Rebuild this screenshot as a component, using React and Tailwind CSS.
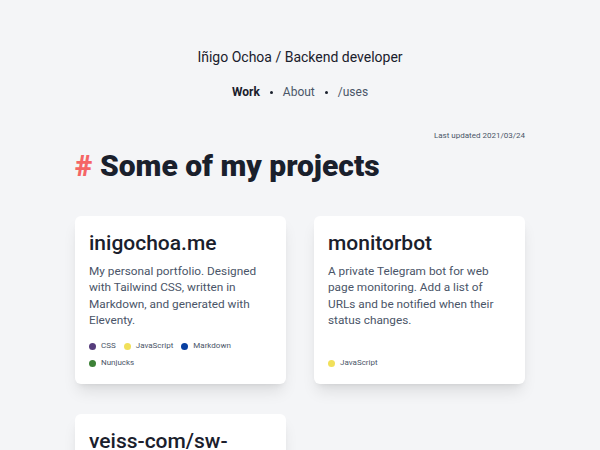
const projects = [
  {
    name: 'inigochoa.me',
    description: 'My personal portfolio. Designed with Tailwind CSS, written in Markdown, and generated with Eleventy.',
    langs: ['CSS', 'JavaScript', 'Markdown', 'Nunjucks'],
  },
  {
    name: 'monitorbot',
    description: 'A private Telegram bot for web page monitoring. Add a list of URLs and be notified when their status changes.',
    langs: ['JavaScript'],
  },
  {
    name: 'veiss-com/sw-precache',
    description: 'Service worker generation for offline-first web apps.',
    langs: ['JavaScript'],
  },
]

const langColor = {
  CSS: 'bg-[#563d7c]',
  JavaScript: 'bg-[#f1e05a]',
  Markdown: 'bg-[#083fa1]',
  Nunjucks: 'bg-[#3d8137]',
}

function Card({ p }) {
  return (
    <div className="flex flex-col rounded-md bg-white px-[14px] pt-[13px] pb-[12px] shadow-lg">
      <h3 className="text-[21px] leading-[28px] font-medium text-[#1a202c]">{p.name}</h3>
      <p className="mt-[6px] text-[11.8px] leading-[16.3px] text-[#4a5568]">{p.description}</p>
      <div className="mt-auto flex flex-wrap gap-x-[8px] pt-[10px]">
        {p.langs.map((l) => (
          <span key={l} className="inline-flex items-center gap-[5px] text-[8px] leading-[16.7px] text-[#4a5568]">
            <span className={`h-[7px] w-[7px] rounded-full ${langColor[l]}`} />
            {l}
          </span>
        ))}
      </div>
    </div>
  )
}

export default function App() {
  return (
    <div className="min-h-screen bg-[#f4f5f7] font-['Roboto',sans-serif] text-[#1a202c]">
      <header className="pt-[47px] text-center">
        <h1 className="text-[14px] leading-[20px]">Iñigo Ochoa / Backend developer</h1>
        <nav className="mt-[17px] flex items-center justify-center gap-[10px] text-[12px] leading-[16px]">
          <a className="font-bold">Work</a>
          <span className="h-[3px] w-[3px] rounded-full bg-[#1a202c]" />
          <a className="text-[#4a5568]">About</a>
          <span className="h-[3px] w-[3px] rounded-full bg-[#1a202c]" />
          <a className="text-[#4a5568]">/uses</a>
        </nav>
      </header>
      <main className="mx-auto w-[450px] pt-[30px]">
        <p className="text-right text-[8px] leading-[12px] text-[#4a5568]">Last updated 2021/03/24</p>
        <h2 className="mt-[6px] text-[30px] leading-[36px] font-black">
          <span className="text-[#f56565]">#</span> Some of my projects
        </h2>
        <div className="mt-[32px] grid grid-cols-2 gap-x-[28px] gap-y-[30px]">
          {projects.map((p) => (
            <Card key={p.name} p={p} />
          ))}
        </div>
      </main>
    </div>
  )
}
